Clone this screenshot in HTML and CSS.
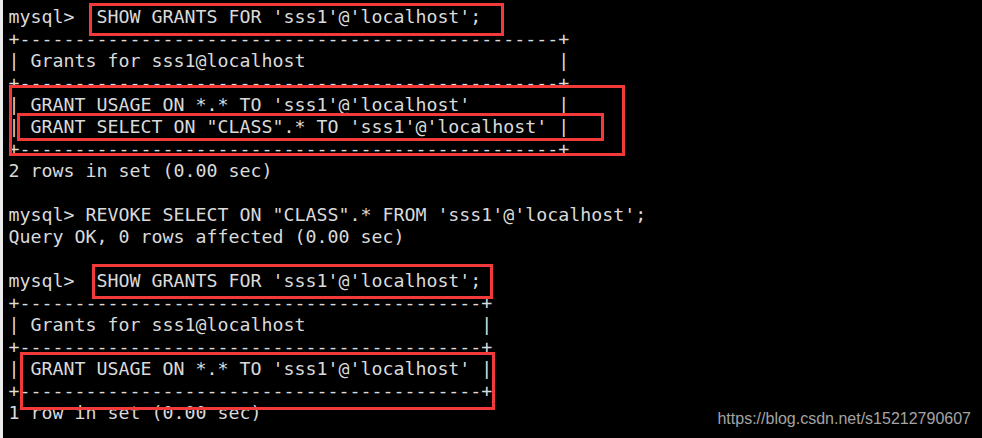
FILE: index.html
```html
<!DOCTYPE html>
<html>
<head>
<meta charset="utf-8">
<link rel="stylesheet" href="styles.css">
</head>
<body>
<div class="term">
<div class="ln">mysql&gt;  SHOW GRANTS FOR 'sss1'@'localhost';</div>
<div class="ln">+-------------------------------------------------+</div>
<div class="ln">| Grants for sss1@localhost                       |</div>
<div class="ln">+-------------------------------------------------+</div>
<div class="ln">| GRANT USAGE ON *.* TO 'sss1'@'localhost'        |</div>
<div class="ln">| GRANT SELECT ON "CLASS".* TO 'sss1'@'localhost' |</div>
<div class="ln">+-------------------------------------------------+</div>
<div class="ln">2 rows in set (0.00 sec)</div>
<div class="ln"></div>
<div class="ln">mysql&gt; REVOKE SELECT ON "CLASS".* FROM 'sss1'@'localhost';</div>
<div class="ln">Query OK, 0 rows affected (0.00 sec)</div>
<div class="ln"></div>
<div class="ln">mysql&gt;  SHOW GRANTS FOR 'sss1'@'localhost';</div>
<div class="ln">+------------------------------------------+</div>
<div class="ln">| Grants for sss1@localhost                |</div>
<div class="ln">+------------------------------------------+</div>
<div class="ln">| GRANT USAGE ON *.* TO 'sss1'@'localhost' |</div>
<div class="ln">+------------------------------------------+</div>
<div class="ln">1 row in set (0.00 sec)</div>

<div class="mark m1"></div>
<div class="mark m2"></div>
<div class="mark m3"></div>
<div class="mark m4"></div>
<div class="mark m5"></div>
<div class="wm">https://blog.csdn.net/s15212790607</div>
</div>
</body>
</html>
```
FILE: styles.css
```css
html, body {
  margin: 0;
  padding: 0;
  background: #000;
}
.term {
  position: relative;
  border-left: 3px solid #ececec;
  padding: 6px 0 0 5.5px;
  box-sizing: border-box;
  height: 438px;
  width: 982px;
  background: #000;
  color: #dadada;
  font-family: "DejaVu Sans Mono", "Liberation Mono", monospace;
  font-size: 18.27px;
  overflow: hidden;
}
.ln {
  white-space: pre;
  height: 22px;
  line-height: 22px;
}
.mark {
  position: absolute;
  border: 3px solid #f23a3a;
  box-sizing: border-box;
}
.m1 { left: 86px; top: 3px; width: 415px; height: 33px; }
.m2 { left: 6px; top: 85px; width: 616px; height: 71px; }
.m3 { left: 14px; top: 113px; width: 587px; height: 28px; }
.m4 { left: 89px; top: 264px; width: 401px; height: 35px; }
.m5 { left: 17px; top: 352px; width: 475px; height: 58px; }
.wm {
  position: absolute;
  right: 11px;
  top: 410.5px;
  font-family: "Liberation Sans", Arial, sans-serif;
  font-size: 16px;
  line-height: 16px;
  color: #a4a4a4;
  white-space: nowrap;
}
```
